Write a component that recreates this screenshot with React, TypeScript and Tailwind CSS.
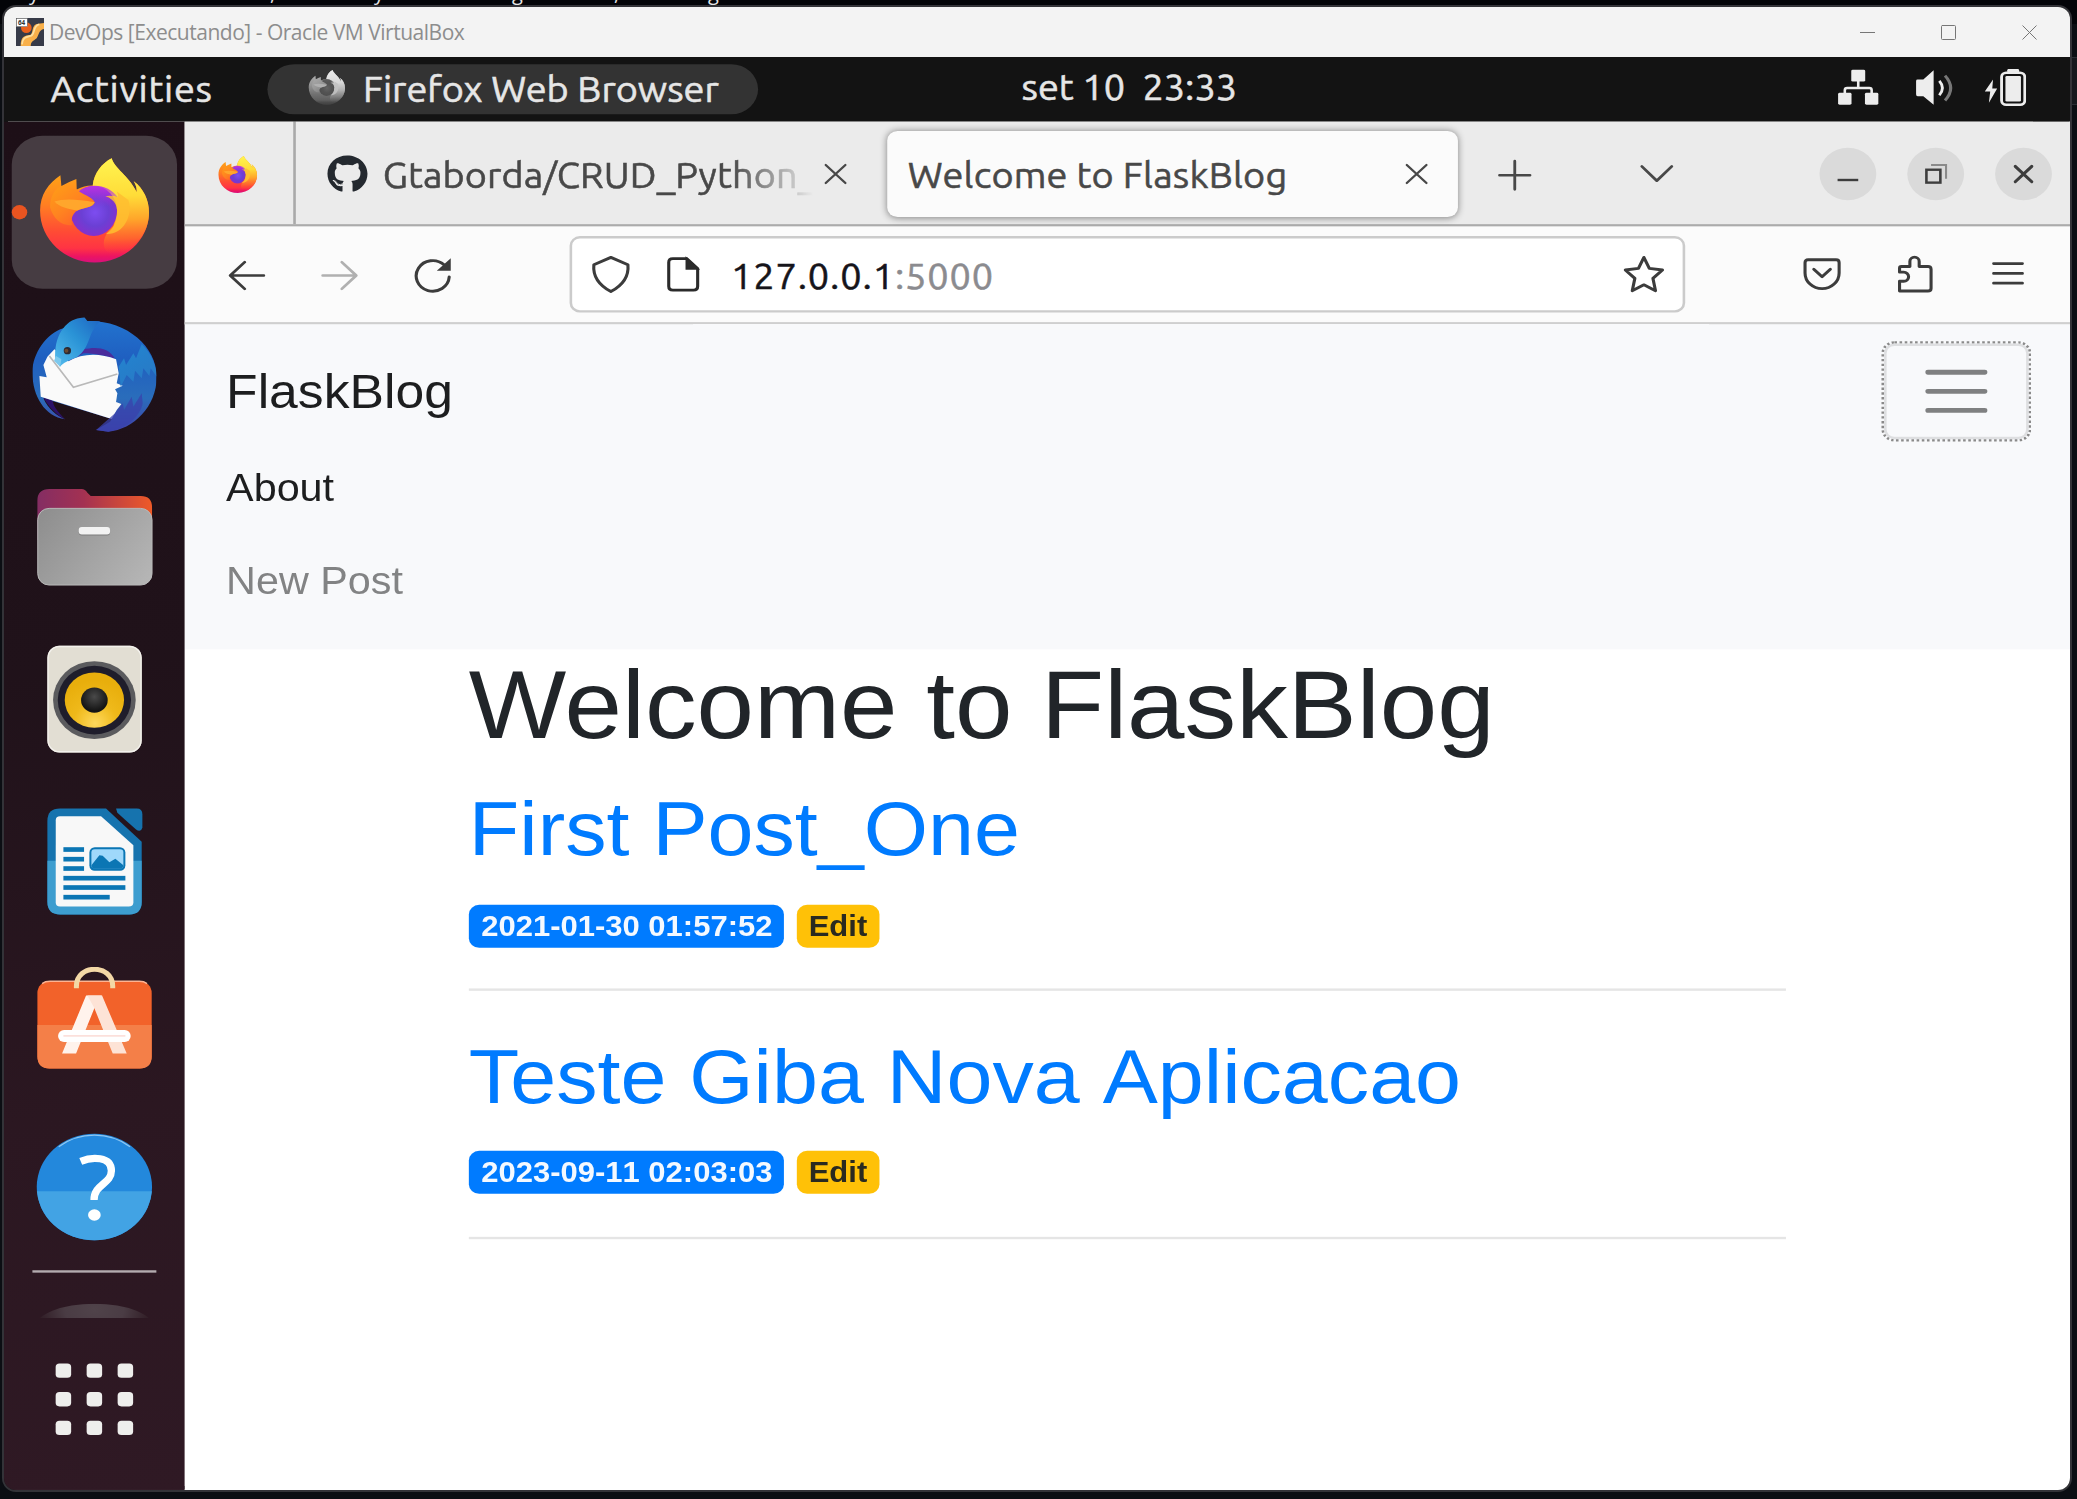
import type { ReactNode } from "react";
import { FaGithub } from "react-icons/fa";

const uiFont = "font-['Ubuntu','Noto_Sans',sans-serif] text-[14.67px] [-webkit-text-stroke:0.22px_currentColor]";

function FirefoxLogo({ id, className }: { id: string; className: string }) {
  return (
    <svg className={className} viewBox="97 105 372 344" preserveAspectRatio="none">
      <defs>
        <linearGradient id={id + "-body"} x1="0" y1="160" x2="0" y2="428" gradientUnits="userSpaceOnUse">
          <stop offset="0" stopColor="#ffa416" />
          <stop offset="0.35" stopColor="#ff7f22" />
          <stop offset="0.65" stopColor="#ff4c34" />
          <stop offset="0.84" stopColor="#ff3344" />
          <stop offset="0.93" stopColor="#ec1462" />
          <stop offset="1" stopColor="#d8107c" />
        </linearGradient>
        <linearGradient id={id + "-flame"} x1="340" y1="115" x2="350" y2="400" gradientUnits="userSpaceOnUse">
          <stop offset="0" stopColor="#fff450" />
          <stop offset="0.4" stopColor="#ffdc38" />
          <stop offset="0.65" stopColor="#ffa52a" />
          <stop offset="0.85" stopColor="#ff6b2c" stopOpacity="0.8" />
          <stop offset="1" stopColor="#ff4038" stopOpacity="0" />
        </linearGradient>
        <radialGradient id={id + "-globe"} cx="285" cy="278" r="82" gradientUnits="userSpaceOnUse">
          <stop offset="0" stopColor="#7d4df0" />
          <stop offset="0.5" stopColor="#6b3fd4" />
          <stop offset="1" stopColor="#8d2cc9" />
        </radialGradient>
        <linearGradient id={id + "-top"} x1="0" y1="195" x2="0" y2="260" gradientUnits="userSpaceOnUse">
          <stop offset="0" stopColor="#bd35e4" />
          <stop offset="1" stopColor="#a030e0" stopOpacity="0" />
        </linearGradient>
        <linearGradient id={id + "-face"} x1="170" y1="200" x2="250" y2="310" gradientUnits="userSpaceOnUse">
          <stop offset="0" stopColor="#ff9a18" />
          <stop offset="0.5" stopColor="#ff8420" />
          <stop offset="1" stopColor="#ff6229" />
        </linearGradient>
      </defs>
      <path
        d="M181 166 L184 198 Q205 186 229 177 L230 209 Q255 196 278 197 C282 160 305 130 335 115 C342 145 385 165 410 217 Q411 200 401 184 C430 205 447 240 447 278 C447 362 372 428 284 428 C195 428 120 360 120 272 C120 225 145 190 181 166Z"
        fill={`url(#${id}-body)`}
      />
      <path
        d="M278 197 C282 160 305 130 335 115 C342 145 385 165 410 217 Q411 200 401 184 C430 205 447 240 447 278 C447 330 415 385 350 405 C300 405 300 350 340 320 L352 270Z"
        fill={`url(#${id}-flame)`}
      />
      <ellipse cx="281" cy="273" rx="70" ry="75" fill={`url(#${id}-globe)`} />
      <path d="M238 212 C275 185 330 198 353 232 Q335 226 325 230 L340 262 L240 262Z" fill={`url(#${id}-top)`} />
      <path d="M316 229 C345 238 356 262 350 290 C346 320 330 335 318 342 C368 345 400 290 385 240 L350 215 Q356 225 353 233 Q335 225 316 229Z" fill="#ffbe30" opacity="0.85" />
      <path
        d="M184 198 L230 209 C245 224 276 230 284 247 C280 264 250 262 232 272 C216 282 212 300 216 315 C190 320 160 300 150 262 C150 230 165 205 184 198Z"
        fill={`url(#${id}-face)`}
      />
      <path d="M163 245 Q200 232 284 247 C278 264 250 262 232 272 C205 268 178 262 163 245Z" fill="#ffa62c" />
    </svg>
  );
}

function ThunderbirdLogo() {
  return (
    <svg className="size-12" viewBox="97 592 372 344" preserveAspectRatio="none">
      <defs>
        <linearGradient id="tb-body" x1="0" y1="600" x2="0" y2="935" gradientUnits="userSpaceOnUse">
          <stop offset="0" stopColor="#2273cf" />
          <stop offset="0.35" stopColor="#1f5fc0" />
          <stop offset="0.7" stopColor="#2a6dbb" />
          <stop offset="1" stopColor="#4040a8" />
        </linearGradient>
        <linearGradient id="tb-head" x1="170" y1="720" x2="300" y2="600" gradientUnits="userSpaceOnUse">
          <stop offset="0" stopColor="#4fb6ea" />
          <stop offset="0.5" stopColor="#2a93d6" />
          <stop offset="1" stopColor="#1f66c4" />
        </linearGradient>
        <linearGradient id="tb-wing" x1="360" y1="700" x2="460" y2="860" gradientUnits="userSpaceOnUse">
          <stop offset="0" stopColor="#2383cf" />
          <stop offset="1" stopColor="#2b74bf" />
        </linearGradient>
      </defs>
      <path
        d="M262 603 C380 600 470 680 470 770 C470 860 400 928 325 935 L288 930 L330 905 L335 897 L130 835 C145 868 170 888 195 898 C135 890 97 830 97 757 C97 700 140 640 190 625 Z"
        fill="url(#tb-body)"
      />
      <path d="M130 832 C145 862 170 885 195 898 C170 872 160 858 158 842Z" fill="#2b1168" />
      <path d="M200 730 L250 700 C285 700 320 708 345 716 C325 680 285 680 250 688Z" fill="#4a2c9c" />
      <path
        d="M163 688 L142 710 L130 735 L140 772 L118 768 L122 830 L335 897 L350 870 L364 852 L348 846 L352 820 L345 808 L368 797 L350 790 L356 760 L348 718 C300 700 250 698 205 724 Z"
        fill="#fafafa"
      />
      <path d="M148 708 L220 802 L352 762" fill="none" stroke="#b9b9b9" strokeWidth="5" />
      <path
        d="M253 592 L262 603 L300 604 C260 640 275 680 230 712 C205 722 190 728 180 740 L166 720 C160 650 195 600 240 594Z"
        fill="url(#tb-head)"
      />
      <path d="M168 708 L184 718 L180 740 L162 722Z" fill="#7cc9ee" />
      <circle cx="202" cy="692" r="11" fill="#2b2a33" />
      <circle cx="199" cy="692" r="6" fill="#6a4a32" />
      <path
        d="M356 740 L372 715 L378 735 L400 700 L408 715 L425 672 C455 700 470 740 470 770 L452 745 L448 768 L430 745 L425 775 L405 752 L400 785 L380 765 L362 800Z"
        fill="url(#tb-wing)"
      />
      <path d="M345 880 L368 850 L372 870 L395 830 L400 860 L425 820 L428 850 C420 890 380 925 325 935 L288 930Z" fill="#3a41ac" opacity="0.75" />
    </svg>
  );
}

function FilesLogo() {
  return (
    <svg className="size-12" viewBox="97 119 372 344" preserveAspectRatio="none">
      <defs>
        <linearGradient id="files-back" x1="112" y1="0" x2="456" y2="0" gradientUnits="userSpaceOnUse">
          <stop offset="0" stopColor="#842d63" />
          <stop offset="0.4" stopColor="#a33152" />
          <stop offset="1" stopColor="#ee5a28" />
        </linearGradient>
        <linearGradient id="files-front" x1="140" y1="205" x2="440" y2="435" gradientUnits="userSpaceOnUse">
          <stop offset="0" stopColor="#8f8f8f" />
          <stop offset="1" stopColor="#b6b6b6" />
        </linearGradient>
      </defs>
      <path d="M112 182 Q112 147 148 147 L245 147 Q255 147 262 158 L272 168 L422 168 Q456 168 456 202 L456 300 L112 300Z" fill="url(#files-back)" />
      <rect x="113" y="205" width="343" height="230" rx="34" fill="url(#files-front)" stroke="#b9b9b9" strokeWidth="3" />
      <rect x="236" y="264" width="94" height="22" rx="9" fill="#7c7c7c" />
      <rect x="236" y="261" width="94" height="22" rx="9" fill="#f2f2f2" />
    </svg>
  );
}

function RhythmboxLogo() {
  return (
    <svg className="size-12" viewBox="97 606 372 344" preserveAspectRatio="none">
      <defs>
        <radialGradient id="rb-cone" cx="285" cy="850" r="130" gradientUnits="userSpaceOnUse">
          <stop offset="0" stopColor="#ffd95c" />
          <stop offset="0.5" stopColor="#efb91a" />
          <stop offset="1" stopColor="#e8ae0c" />
        </radialGradient>
        <radialGradient id="rb-cap" cx="283" cy="770" r="42" gradientUnits="userSpaceOnUse">
          <stop offset="0" stopColor="#4a4a4a" />
          <stop offset="1" stopColor="#151515" />
        </radialGradient>
      </defs>
      <rect x="142" y="617" width="283" height="320" rx="36" fill="#e2ded3" />
      <rect x="144" y="619" width="279" height="316" rx="34" fill="none" stroke="#f3f1ec" strokeWidth="4" />
      <ellipse cx="283" cy="780" rx="124" ry="117" fill="#5b5b5e" />
      <ellipse cx="283" cy="780" rx="110" ry="103" fill="#1f1d2b" />
      <ellipse cx="283" cy="780" rx="89" ry="83" fill="url(#rb-cone)" />
      <ellipse cx="283" cy="780" rx="40" ry="38" fill="url(#rb-cap)" />
    </svg>
  );
}

function WriterLogo() {
  return (
    <svg className="size-12" viewBox="97 103 372 344" preserveAspectRatio="none">
      <path d="M142 152 Q142 115 180 115 L318 115 L425 215 L425 395 Q425 433 388 433 L180 433 Q142 433 142 395Z" fill="#1673ae" />
      <path d="M142 272 L425 272 L425 395 Q425 433 388 433 L180 433 Q142 433 142 395Z" fill="#3d9dcf" />
      <path d="M348 115 L410 115 Q427 115 427 132 L427 172 Q422 188 408 178 L352 128Z" fill="#1673ae" />
      <path d="M167 150 Q167 138 180 138 L303 138 L400 225 L400 396 Q400 409 386 409 L180 409 Q167 409 167 396Z" fill="#f8f8f8" />
      <g fill="#0b76b4">
        <rect x="190" y="231" width="62" height="14" />
        <rect x="190" y="260" width="62" height="14" />
        <rect x="190" y="288" width="62" height="14" />
        <rect x="190" y="317" width="186" height="14" />
        <rect x="190" y="345" width="186" height="14" />
        <rect x="190" y="374" width="139" height="14" />
        <rect x="268" y="231" width="108" height="71" rx="16" />
      </g>
      <rect x="274" y="237" width="96" height="58" rx="10" fill="#9fd8fb" />
      <path d="M274 285 L298 255 L308 257 L328 276 L346 266 L370 285 Q370 296 358 296 L286 296 Q274 296 274 285Z" fill="#0b76b4" />
    </svg>
  );
}

function SoftwareLogo() {
  return (
    <svg className="size-12" viewBox="97 590 372 344" preserveAspectRatio="none">
      <rect x="112" y="632" width="343" height="263" rx="36" fill="#f2622a" />
      <path d="M112 764 H455 V859 Q455 895 419 895 H148 Q112 895 112 859Z" fill="#f47f48" />
      <path d="M126 640 Q135 633 150 633 H418 Q432 633 441 640" fill="none" stroke="#fbb393" strokeWidth="4" />
      <path d="M229 654 V648 C229 580 338 580 338 648 V654" fill="none" stroke="#f3d8a6" strokeWidth="15" />
      <path d="M258 676 L305 676 L282 716 L228 850 L186 850Z" fill="#fff3ec" />
      <path d="M262 676 L306 676 L380 850 L338 850 L282 712Z" fill="#fde3d6" />
      <rect x="174" y="779" width="218" height="36" rx="18" fill="#ffffff" />
      <path d="M190 797 H376" stroke="#f9c9c0" strokeWidth="3" />
    </svg>
  );
}

function HelpLogo() {
  return (
    <svg className="size-12" viewBox="97 88 372 344" preserveAspectRatio="none">
      <defs>
        <clipPath id="help-lower">
          <rect x="97" y="274" width="372" height="160" />
        </clipPath>
      </defs>
      <ellipse cx="283" cy="261" rx="173" ry="160" fill="#2388dc" />
      <ellipse cx="283" cy="261" rx="173" ry="160" fill="#42a3e4" clipPath="url(#help-lower)" />
      <path d="M176 140 C240 94 326 94 390 140" fill="none" stroke="#8cc6f2" strokeWidth="4" />
      <path d="M242 184 C275 170 334 168 334 212 C334 252 282 252 282 300" fill="none" stroke="#ffffff" strokeWidth="22" />
      <ellipse cx="283" cy="345" rx="19" ry="17" fill="#ffffff" />
    </svg>
  );
}

function VirtualBoxIcon() {
  return (
    <svg className="size-7" viewBox="48 51 84 84">
      <rect x="48" y="51" width="84" height="84" fill="#363a48" />
      <circle cx="79" cy="80" r="16" fill="#e8601c" />
      <path d="M62 135 C62 105 75 104 90 102 C102 98 92 70 115 68 L132 66 V84 C115 88 118 100 110 112 C98 122 94 120 92 135Z" fill="#f9b04a" />
      <path d="M66 130 C68 108 80 108 94 104 C106 98 98 74 118 70" fill="none" stroke="#fde0a0" strokeWidth="5" />
      <rect x="49" y="52" width="33" height="25" fill="#ffffff" stroke="#555" strokeWidth="1.5" />
      <text x="54" y="72" fontSize="19" fontWeight="700" fill="#333" fontFamily="Open Sans, sans-serif">64</text>
    </svg>
  );
}

function HostTitleBar() {
  return (
    <div className="flex h-[50px] items-center bg-[#f3f3f3] pl-3">
      <VirtualBoxIcon />
      <span className="ml-[5px] pt-px whitespace-nowrap font-['Open_Sans',sans-serif] text-[21px] tracking-[-0.48px] text-[#8d8d8d]">
        DevOps [Executando] - Oracle VM VirtualBox
      </span>
      <div className="mr-[33px] ml-auto flex items-center gap-[66px]">
        {["M0 7.5H15", "M1 .5H13.5Q14.5 .5 14.5 1.5V13.5Q14.5 14.5 13.5 14.5H1.5Q.5 14.5 .5 13.5V1.5Q.5 .5 1.5 .5Z", "M.5 .5L14.5 14.5M14.5 .5L.5 14.5"].map((d) => (
          <svg key={d} className="size-[15px]" viewBox="0 0 15 15" fill="none" stroke="#767676">
            <path d={d} />
          </svg>
        ))}
      </div>
    </div>
  );
}

function GnomeTopBar() {
  return (
    <header className={`relative flex h-[27px] items-center bg-[#131313] text-[#e6e6e6] ${uiFont}`}>
      <span className="ml-[18px] w-[84px] pt-px leading-[26px] tracking-[0.27px]">Activities</span>
      <div className="flex h-[21px] w-[190px] items-center rounded-full bg-[#333333] pl-[15px]">
        <FirefoxLogo id="ff-bar" className="size-4 -translate-y-px grayscale" />
        <span className="ml-[6px] pt-px leading-5 whitespace-nowrap">Firefox Web Browser</span>
      </div>
      <span className="absolute top-0 left-[394px] whitespace-pre leading-[26px]">set 10  23:33</span>
      <div className="mr-[17px] ml-auto flex items-center">
        <svg className="mr-[13.5px] size-4 -translate-y-px" viewBox="0 0 16 16" fill="#ededed">
          <rect x="5.3" y="0.3" width="5.4" height="5" rx="0.6" />
          <rect x="0.2" y="10" width="5.2" height="5" rx="0.6" />
          <rect x="10.6" y="10" width="5.2" height="5" rx="0.6" />
          <path d="M8 5V8M2.8 10.2V8.9Q2.8 8 3.7 8H12.3Q13.2 8 13.2 8.9V10.2" fill="none" stroke="#ededed" strokeWidth="1" />
        </svg>
        <svg className="mr-[11.5px] size-4 -translate-y-px" viewBox="0 0 16 16" fill="#ededed">
          <path d="M0.4 5Q0.4 4.4 1 4.4H3.2L7.2 0.6V15L3.2 11.4H1Q0.4 11.4 0.4 10.6Z" />
          <path d="M9.4 5Q11.8 8 9.4 11" fill="none" stroke="#ededed" strokeWidth="1.1" />
          <path d="M11.6 2.8Q16 8 11.6 13.2" fill="none" stroke="#777" strokeWidth="1.2" />
        </svg>
        <svg className="size-4 -translate-y-px" viewBox="0 0 16 16" fill="#ededed">
          <path d="M3.2 4.4L0 9.4H2.1L1.6 14.2L4.8 8.2H2.9Z" />
          <rect x="8.7" y="0" width="4.6" height="2" rx="0.6" />
          <rect x="6.5" y="1.6" width="9" height="13.4" rx="1.8" fill="none" stroke="#ededed" strokeWidth="1.1" />
          <rect x="8" y="3" width="6" height="10.6" rx="0.5" />
        </svg>
      </div>
    </header>
  );
}

function DockItem({ active = false, children }: { active?: boolean; children: ReactNode }) {
  return (
    <div className={`relative flex size-16 shrink-0 items-center justify-center ${active ? "rounded-xl bg-[#463c42]" : ""}`}>
      {active && <span className="absolute top-[29px] left-0 size-[6px] rounded-full bg-[#e95420]" />}
      {children}
    </div>
  );
}

function Dock() {
  return (
    <aside className="flex w-[70px] shrink-0 flex-col items-center bg-linear-[172deg,#1d0f17_0%,#20121a_40%,#2b1721_72%,#2f1924_100%] pt-[6px]">
      <div className="flex flex-col gap-1">
        <DockItem active>
          <FirefoxLogo id="ff-dock" className="size-12" />
        </DockItem>
        <DockItem><ThunderbirdLogo /></DockItem>
        <DockItem><FilesLogo /></DockItem>
        <DockItem><RhythmboxLogo /></DockItem>
        <DockItem><WriterLogo /></DockItem>
        <DockItem><SoftwareLogo /></DockItem>
        <DockItem><HelpLogo /></DockItem>
      </div>
      <div className="mt-[3px] h-px w-12 bg-[#b3abaf]" />
      <div className="mt-[13px] h-[6px] w-[46px] overflow-hidden">
        <div className="h-5 w-[46px] rounded-[50%] bg-[radial-gradient(ellipse_at_50%_12%,#50434a_0%,#4a3c44_35%,#2c1821_72%)]" />
      </div>
      <div className="mt-[19px] grid grid-cols-3 gap-[6px]">
        {Array.from({ length: 9 }, (_, i) => (
          <span key={i} className="size-[6px] rounded-[1.5px] bg-[#eeeeec]" />
        ))}
      </div>
    </aside>
  );
}

function Glyph({ d, className = "size-4", width = 1.1 }: { d: string; className?: string; width?: number }) {
  return (
    <svg className={className} viewBox="0 0 16 16" fill="none" stroke="currentColor" strokeWidth={width} strokeLinecap="round" strokeLinejoin="round">
      <path d={d} />
    </svg>
  );
}

function TabStrip() {
  const cross = "M4.2 4.2L11.8 11.8M11.8 4.2L4.2 11.8";
  return (
    <div className={`flex h-11 items-center border-b border-[#ababab] bg-[#ebebeb] text-[#484848] ${uiFont}`}>
      <div className="flex h-full w-[42.4px] items-center pt-[1.5px] pl-[11.5px]">
        <FirefoxLogo id="ff-tab" className="size-[17px]" />
      </div>
      <div className="h-full w-[0.6px] bg-[#a9a9a9]" />
      <div className="flex w-[229px] items-center pl-3">
        <FaGithub className="size-4 shrink-0 text-[#24292f]" />
        <div className="ml-[5.7px] w-[168.3px] overflow-hidden pt-[2px] tracking-[0.05px] whitespace-nowrap mask-r-from-80% mask-r-to-99%">
          Gtaborda/CRUD_Python_Flask
        </div>
        <Glyph d={cross} className="-ml-px size-4 shrink-0" width={0.9} />
      </div>
      <div className="flex h-9 w-[221px] items-center rounded bg-[#fbfbfb] pr-2 pl-[8px] shadow-[0_0_3px_rgba(0,0,0,0.45)]">
        <span className="pt-[2px] tracking-[0.08px] whitespace-nowrap">Welcome to FlaskBlog</span>
        <Glyph d={cross} className="ml-auto size-4" width={0.9} />
      </div>
      <Glyph d="M8 2.6V14.4M2.1 8.5H13.9" className="ml-[13.9px] size-4" />
      <Glyph d="M2.2 4.8L8 10.8L13.8 4.8" className="ml-[39.1px] size-4" />
      <div className="mr-[7px] ml-auto flex gap-3">
        <div className="flex size-[22px] items-center justify-center rounded-full bg-[#dadada]">
          <div className="mt-[5px] h-px w-2 bg-[#3d3d3d]" />
        </div>
        <div className="flex size-[22px] items-center justify-center rounded-full bg-[#dadada]">
          <svg className="size-4" viewBox="0 0 16 16" fill="none">
            <rect x="4.4" y="6.2" width="5.4" height="5.4" stroke="#3d3d3d" strokeWidth="1" />
            <path d="M6.2 4.2H12V10" stroke="#8a8a8a" strokeWidth="0.8" />
          </svg>
        </div>
        <div className="flex size-[22px] items-center justify-center rounded-full bg-[#dadada] text-[#3d3d3d]">
          <Glyph d="M4.8 4.8L11.2 11.2M11.2 4.8L4.8 11.2" width={1.2} />
        </div>
      </div>
    </div>
  );
}

function NavToolbar() {
  return (
    <div className={`flex h-[41px] items-center border-b border-[#cfcfcf] bg-[#fbfbfb] text-[#3c3c3c] ${uiFont}`}>
      <Glyph d="M14.6 8.5H1.8M7.2 2.9L1.6 8.5L7.2 14.1" className="ml-4 size-4" />
      <Glyph d="M1.4 8.5H14.2M8.8 2.9L14.4 8.5L8.8 14.1" className="ml-5 size-4 text-[#b0b0b0]" />
      <svg className="ml-5 size-4" viewBox="0 0 16 16" fill="none">
        <path d="M14.4 9.1A6.4 6.4 0 1 1 12.4 4" stroke="#3c3c3c" strokeWidth="1.2" strokeLinecap="round" />
        <path d="M15 1.3V6.5H9.6Z" fill="#3c3c3c" />
      </svg>
      <div className="ml-[45px] flex h-8 w-[432px] items-center rounded border border-[#cbcbcb] bg-white px-[7px]">
        <Glyph d="M8 0.9L14.6 4Q15.2 11 8 15.2Q0.8 11 1.4 4Z" className="size-4" width={1.2} />
        <svg className="ml-3 size-4" viewBox="0 0 16 16" fill="none">
          <path d="M4 1.4H9.4L13.6 5.6V13Q13.6 14.6 12 14.6H4Q2.4 14.6 2.4 13V3Q2.4 1.4 4 1.4Z" stroke="#2b2b2b" strokeWidth="1.2" />
          <path d="M9.2 1.2V5.8H13.8Z" fill="#2b2b2b" stroke="#2b2b2b" strokeWidth="0.6" />
        </svg>
        <span className="ml-[10.5px] pt-[2px] tracking-[0.34px] whitespace-nowrap text-[#15141a]">
          127.0.0.1<span className="text-[#8b8b8f]">:5000</span>
        </span>
        <Glyph d="M8 0.9L10.1 5.5L15.2 6.2L11.5 9.7L12.5 14.9L8 12.4L3.5 14.9L4.5 9.7L0.8 6.2L5.9 5.5Z" className="ml-auto size-4" width={1.2} />
      </div>
      <svg className="ml-[45px] size-4" viewBox="0 0 16 16" fill="none" stroke="#3c3c3c" strokeWidth="1.2" strokeLinecap="round" strokeLinejoin="round">
        <path d="M2.6 1.9H13.4Q14.6 1.9 14.6 3.1V7.4A6.6 6.6 0 0 1 1.4 7.4V3.1Q1.4 1.9 2.6 1.9Z" />
        <path d="M4.8 5.9L8 9L11.2 5.9" />
      </svg>
      <Glyph
        d="M2 15V10.9H3.6A1.9 1.9 0 0 0 3.6 7.1H2V5.4Q2 4.7 2.7 4.7H6V2.6A1.8 1.8 0 0 1 9.6 2.6V4.7H13Q14.2 4.7 14.2 5.9V13.8Q14.2 15 13 15Z"
        className="ml-[20.2px] size-4"
        width={1.2}
      />
      <Glyph d="M2.4 3.5H13.6M2.4 7.6H13.6M2.4 11.7H13.6" className="ml-[19.8px] size-4" width={1.1} />
    </div>
  );
}

function BlogNavbar() {
  return (
    <nav className="flex flex-wrap items-center justify-between bg-[#f8f9fb] px-4 py-2">
      <a className="py-[5px] text-[20px] leading-[30px] text-[#1d1e1f]">FlaskBlog</a>
      <button className="h-10 rounded border border-black/10 px-3 outline-1 outline-[#8a8a8a] outline-dotted">
        <svg className="size-[30px]" viewBox="0 0 30 30" fill="none" stroke="#7f8081" strokeWidth="2" strokeLinecap="round">
          <path d="M4 7H26M4 15H26M4 23H26" />
        </svg>
      </button>
      <ul className="w-full">
        <li className="pt-[8.6px] pb-[7.4px] text-[#1d1e1f]">About</li>
        <li className="pt-[8.4px] pb-[7.6px] text-[#828384]">New Post</li>
      </ul>
    </nav>
  );
}

function Post({ title, date }: { title: string; date: string }) {
  return (
    <article className="last:[&>h2]:mb-[7px] last:[&>h2]:pt-px last:[&>hr]:mt-[16.4px]">
      <h2 className="mb-2 text-[32px] leading-[38.4px] text-[#007bff]">{title}</h2>
      <div className="flex h-6 items-center gap-[5px] pt-[2.8px] text-[12px] leading-none font-bold [font-kerning:none]">
        <span className="w-[122px] rounded bg-[#007bff] py-[3px] pl-[4.8px] whitespace-nowrap text-[#f4f9ff]">{date}</span>
        <span className="w-8 rounded bg-[#ffc107] py-[3px] pl-[4.6px] whitespace-nowrap text-[#2a2a20]">Edit</span>
      </div>
      <hr className="mt-[15.7px] mb-[16.3px] border-[#e5e5e5]" />
    </article>
  );
}

function BrowserWindow() {
  return (
    <main className="flex min-w-0 flex-1 flex-col bg-white">
      <TabStrip />
      <NavToolbar />
      <div className="font-['Liberation_Sans',Arial,sans-serif] text-[16px] leading-6 text-[#212529]">
        <BlogNavbar />
        <div className="mx-auto w-[540px] px-[15px]">
          <h1 className="mb-2 text-[40px] leading-[47.8px] pb-[0.2px]">Welcome to FlaskBlog</h1>
          <Post title="First Post_One" date="2021-01-30 01:57:52" />
          <Post title={"Teste Giba Nova\u00a0Aplicacao"} date="2023-09-11 02:03:03" />
        </div>
      </div>
    </main>
  );
}

/* Descenders of the line of text that the window covers. */
const coveredText = [
  { left: 29, char: "y" },
  { left: 270, char: "," },
  { left: 374, char: "y" },
  { left: 512, char: "g" },
  { left: 614, char: "," },
  { left: 708, char: "g" },
];

export default function App() {
  return (
    <div className="relative h-[1499px] w-[2077px] overflow-hidden bg-[#0b0e13]">
      <div className="absolute inset-x-0 top-0 h-6 overflow-hidden bg-[#030408]">
        {coveredText.map((t) => (
          <span key={t.left} className="absolute -top-[17px] font-['Open_Sans',sans-serif] text-[20px] leading-5 text-[#e6e6e6]" style={{ left: t.left }}>
            {t.char}
          </span>
        ))}
      </div>
      <div className="absolute top-[57px] right-0 h-[48px] w-[5px] border-y border-[#2a2d33] bg-[#16181d]" />
      <div className="absolute top-[5px] left-[2px] h-[1487px] w-[2070px] overflow-hidden rounded-[14px] border-2 border-[#333338] bg-[#131313]">
        <HostTitleBar />
        <div className="h-[1433px] w-[2066px] overflow-hidden">
          {/* The 800x600 guest display, stretched to fill the window. */}
          <div className="flex h-[600px] w-[800px] origin-top-left scale-x-[2.5825] scale-y-[2.3883] flex-col">
            <GnomeTopBar />
            <div className="flex min-h-0 flex-1">
              <Dock />
              <BrowserWindow />
            </div>
          </div>
        </div>
      </div>
    </div>
  );
}
